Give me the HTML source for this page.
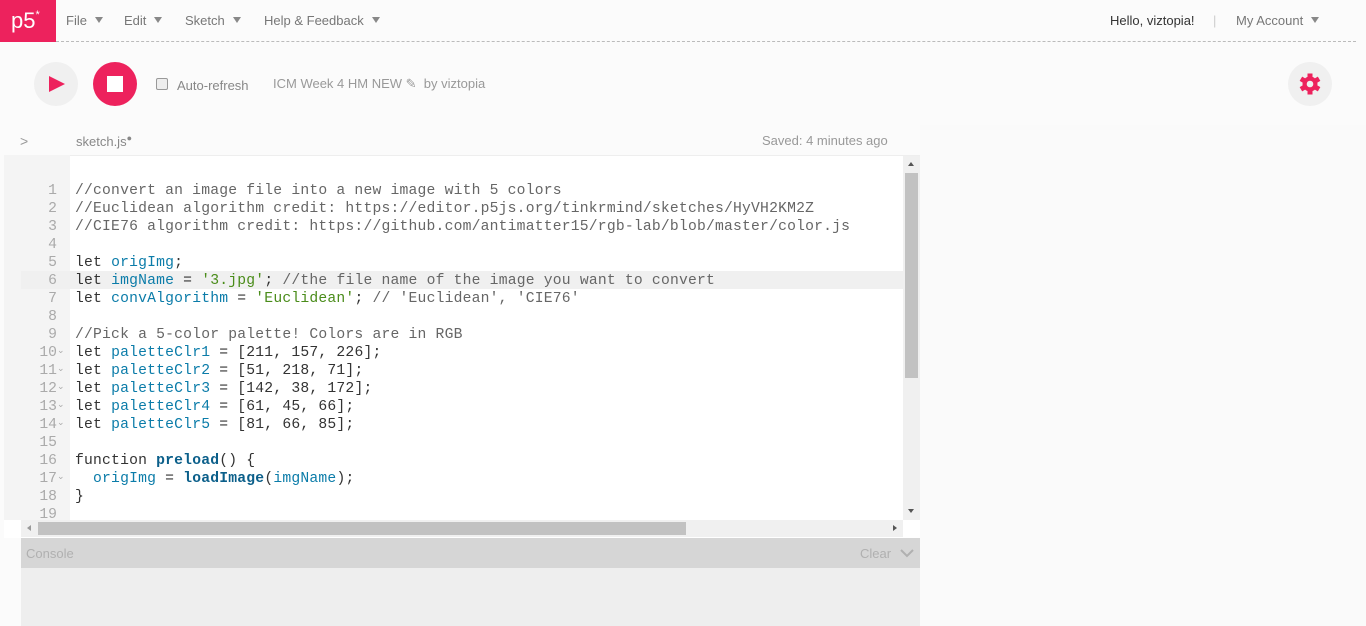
<!DOCTYPE html>
<html><head><meta charset="utf-8"><style>
*{margin:0;padding:0;box-sizing:border-box}
body{width:1366px;height:626px;overflow:hidden;background:#fbfbfb;font-family:"Liberation Sans",sans-serif;position:relative;color:#666}
.abs{position:absolute}
.nav{font-size:13px;color:#777;top:13px}
.tri{display:inline-block;width:0;height:0;border-left:4.5px solid transparent;border-right:4.5px solid transparent;border-top:6px solid #888;margin-left:8px;vertical-align:2px}
.code{font-family:"Liberation Mono",monospace;font-size:14.7px;letter-spacing:0.2px;line-height:18px;white-space:pre;color:#333}
.ln{font-family:"Liberation Mono",monospace;font-size:14.7px;line-height:18px;color:#aaa;text-align:right;white-space:pre}
.v{color:#0b7ca9}.s{color:#4a8c1a}.c{color:#666}.f{color:#0b5f8a;font-weight:bold}
</style></head><body>
<div class="abs" style="left:0;top:0;width:56px;height:42px;background:#ed225d;color:#fff;font-size:22px;padding:8px 0 0 11px">p5<sup style="font-size:11px;vertical-align:10px">*</sup></div>
<div class="abs" style="left:56px;right:10px;top:41px;border-top:1px dashed #bbb"></div>
<div class="abs nav" style="left:66px">File<span class="tri"></span></div>
<div class="abs nav" style="left:124px">Edit<span class="tri"></span></div>
<div class="abs nav" style="left:185px">Sketch<span class="tri"></span></div>
<div class="abs nav" style="left:264px">Help &amp; Feedback<span class="tri"></span></div>
<div class="abs nav" style="left:1110px;color:#333">Hello, viztopia!</div>
<div class="abs nav" style="left:1213px;color:#ccc">|</div>
<div class="abs nav" style="left:1236px">My Account<span class="tri"></span></div>

<div class="abs" style="left:34px;top:62px;width:44px;height:44px;border-radius:50%;background:#f0f0f0"></div>
<div class="abs" style="left:49px;top:76px;width:0;height:0;border-top:8px solid transparent;border-bottom:8px solid transparent;border-left:16px solid #ed225d"></div>
<div class="abs" style="left:93px;top:62px;width:44px;height:44px;border-radius:50%;background:#ed225d"></div>
<div class="abs" style="left:107px;top:76px;width:16px;height:16px;background:#fff"></div>
<div class="abs" style="left:156px;top:78px;width:12px;height:12px;border:1px solid #999;border-radius:2px;background:#eee"></div>
<div class="abs" style="left:177px;top:78px;font-size:13px;color:#888">Auto-refresh</div>
<div class="abs" style="left:273px;top:76px;font-size:13px;color:#999">ICM Week 4 HM NEW ✎&nbsp; by viztopia</div>
<div class="abs" style="left:1288px;top:62px;width:44px;height:44px;border-radius:50%;background:#f0f0f0"></div>
<svg class="abs" style="left:1298px;top:72px" width="24" height="24" viewBox="0 0 24 24"><g fill="#ed225d"><circle cx="12" cy="12" r="7.5"/><g id="t"><rect x="9.5" y="1.5" width="5" height="5"/><rect x="9.5" y="17.5" width="5" height="5"/></g><use href="#t" transform="rotate(60 12 12)"/><use href="#t" transform="rotate(120 12 12)"/></g><circle cx="12" cy="12" r="3.3" fill="#f0f0f0"/></svg>

<div class="abs" style="left:20px;top:133px;color:#999;font-size:14px">&gt;</div>
<div class="abs" style="left:76px;top:133px;font-size:13px;color:#888">sketch.js<span style="font-size:9px;vertical-align:5px">●</span></div>
<div class="abs" style="left:762px;top:133px;font-size:13px;color:#999">Saved: 4 minutes ago</div>
<div class="abs" style="left:936px;top:133px;font-size:13px;color:#888">Preview</div>

<div class="abs" style="left:920px;top:125px;width:446px;height:501px;background:#fafafa"></div>
<div class="abs" style="left:4px;top:155px;width:916px;height:383px;background:#fff;border-top:1px solid #eee"></div>
<div class="abs" style="left:4px;top:155px;width:66px;height:365px;background:#f4f4f4"></div>
<div class="abs" style="left:21px;top:271px;width:882px;height:18px;background:#f0f0f0"></div>
<div class="abs" style="left:903px;top:156px;width:17px;height:364px;background:#f0f0f0"></div>
<div class="abs" style="left:905px;top:173px;width:13px;height:205px;background:#c2c2c2"></div>
<div class="abs" style="left:908px;top:162px;border-left:3.5px solid transparent;border-right:3.5px solid transparent;border-bottom:4px solid #555"></div>
<div class="abs" style="left:908px;top:509px;border-left:3.5px solid transparent;border-right:3.5px solid transparent;border-top:4px solid #555"></div>
<div class="abs" style="left:21px;top:520px;width:882px;height:17px;background:#f0f0f0"></div>
<div class="abs" style="left:38px;top:522px;width:648px;height:13px;background:#c2c2c2"></div>
<div class="abs" style="left:27px;top:525px;border-top:3.5px solid transparent;border-bottom:3.5px solid transparent;border-right:4px solid #999"></div>
<div class="abs" style="left:893px;top:525px;border-top:3.5px solid transparent;border-bottom:3.5px solid transparent;border-left:4px solid #555"></div>

<div class="abs ln" style="left:21px;top:182px;width:36px">1
2
3
4
5
6
7
8
9
10
11
12
13
14
15
16
17
18
19</div>
<div class="abs" style="left:57px;top:341px;font-size:9px;line-height:18px;color:#aaa;white-space:pre">⌄
⌄
⌄
⌄
⌄


⌄</div>
<div class="abs code" style="left:75px;top:182px"><span class="c">//convert an image file into a new image with 5 colors
//Euclidean algorithm credit: https://editor.p5js.org/tinkrmind/sketches/HyVH2KM2Z
//CIE76 algorithm credit: https://github.com/antimatter15/rgb-lab/blob/master/color.js</span>

let <span class="v">origImg</span>;
let <span class="v">imgName</span> = <span class="s">'3.jpg'</span>; <span class="c">//the file name of the image you want to convert</span>
let <span class="v">convAlgorithm</span> = <span class="s">'Euclidean'</span>; <span class="c">// 'Euclidean', 'CIE76'</span>

<span class="c">//Pick a 5-color palette! Colors are in RGB</span>
let <span class="v">paletteClr1</span> = [211, 157, 226];
let <span class="v">paletteClr2</span> = [51, 218, 71];
let <span class="v">paletteClr3</span> = [142, 38, 172];
let <span class="v">paletteClr4</span> = [61, 45, 66];
let <span class="v">paletteClr5</span> = [81, 66, 85];

function <span class="f">preload</span>() {
  <span class="v">origImg</span> = <span class="f">loadImage</span>(<span class="v">imgName</span>);
}</div>

<div class="abs" style="left:21px;top:538px;width:899px;height:30px;background:#d6d6d6"></div>
<div class="abs" style="left:26px;top:546px;font-size:13px;color:#b0b0b0">Console</div>
<div class="abs" style="left:860px;top:546px;font-size:13px;color:#b0b0b0">Clear</div>
<svg class="abs" style="left:899px;top:547px" width="16" height="12"><path d="M2 3 L8 9 L14 3" stroke="#b0b0b0" stroke-width="2" fill="none"/></svg>
<div class="abs" style="left:21px;top:568px;width:899px;height:58px;background:#eeeeee"></div>
</body></html>
